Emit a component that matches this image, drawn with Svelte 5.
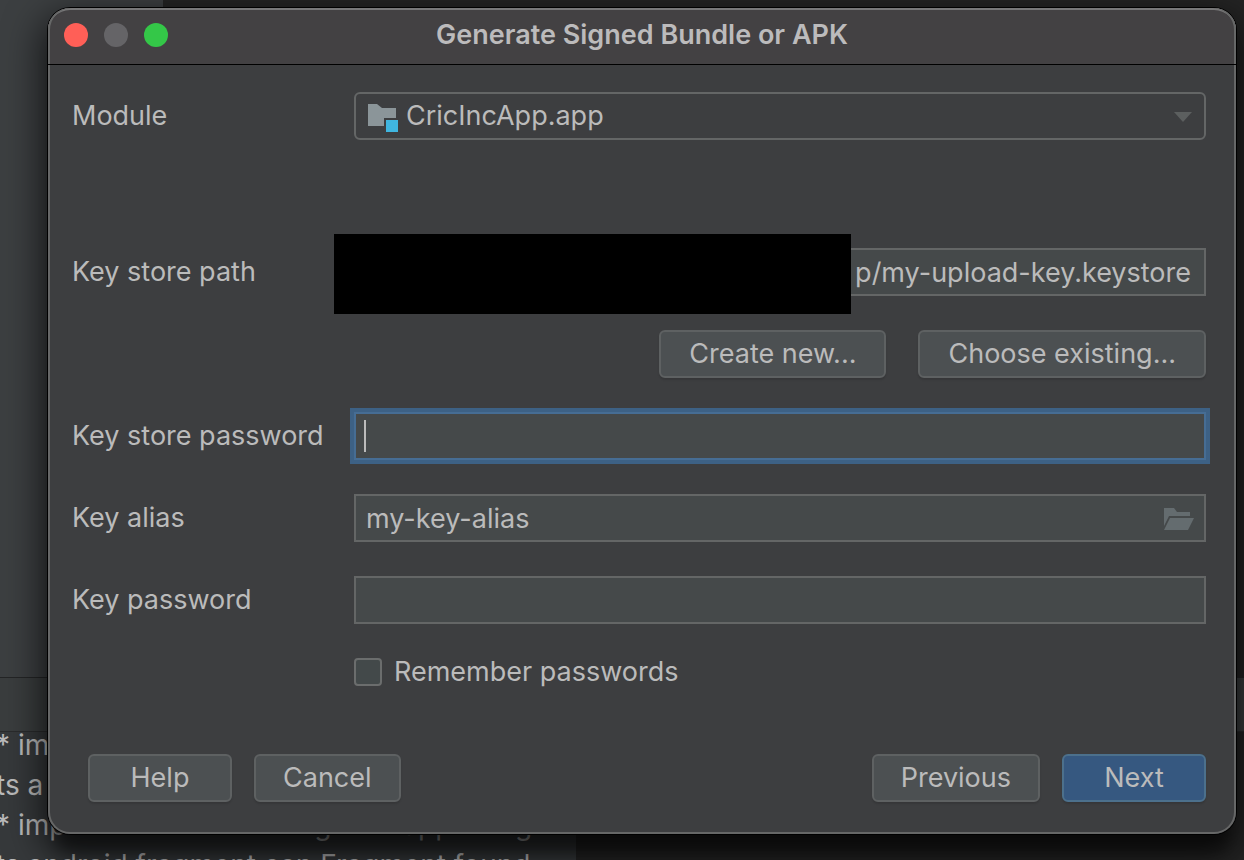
<script lang="ts">
    import { onMount } from 'svelte';

    let keyAlias = $state("my-key-alias");
    let storePassword = $state("");
    let keyPassword = $state("");
    let remember = $state(false);
    let passwordInput: HTMLInputElement;

    const editorLines = [
        "* im",
        "ts a",
        "* implements its resulting new app using",
        "ts android fragment can Fragment found",
    ];

    onMount(() => passwordInput.focus());
</script>

<main class="desktop">
    <div class="ide" aria-hidden="true">
        <div class="ide-top"></div>
        <div class="ide-bar"></div>
        <div class="ide-editor">
            <div class="code">
                {#each editorLines as line}
                    <div>{line}</div>
                {/each}
            </div>
        </div>
    </div>

    <section class="dialog" aria-labelledby="dialog-title">
        <header class="titlebar">
            <div class="lights">
                <button class="light close" aria-label="Close"></button>
                <button class="light minimize" aria-label="Minimize" disabled></button>
                <button class="light maximize" aria-label="Maximize"></button>
            </div>
            <h1 id="dialog-title">Generate Signed Bundle or APK</h1>
        </header>

        <form class="form" onsubmit={(e) => e.preventDefault()}>
            <div class="row module-row">
                <label for="module">Module</label>
                <div class="control">
                    <select id="module" class="field module">
                        <option>CricIncApp.app</option>
                    </select>
                    <svg class="folder-icon" width="32" height="28" viewBox="0 0 32 28">
                        <path d="M0 0h9l5 4h14v10H16v8H0z" fill="#8b9599" />
                        <path d="M18 16h12v12H18z" fill="#40b6e0" />
                    </svg>
                    <svg class="arrow-icon" width="18" height="10" viewBox="0 0 18 10">
                        <path d="M0 0h18l-9 10z" fill="#5c5f5f" />
                    </svg>
                </div>
            </div>

            <div class="row">
                <label for="store-path">Key store path</label>
                <div class="control">
                    <input id="store-path" class="field path" type="text" value="p/my-upload-key.keystore" />
                    <div class="redacted"></div>
                </div>
            </div>

            <div class="path-actions">
                <button type="button" class="btn">Create new...</button>
                <button type="button" class="btn">Choose existing...</button>
            </div>

            <div class="row">
                <label for="store-password">Key store password</label>
                <div class="control">
                    <input id="store-password" class="field focused" type="password" bind:this={passwordInput} bind:value={storePassword} />
                    <span class="caret"></span>
                </div>
            </div>

            <div class="row">
                <label for="key-alias">Key alias</label>
                <div class="control">
                    <input id="key-alias" class="field" type="text" bind:value={keyAlias} />
                    <button type="button" class="browse" aria-label="Browse key aliases">
                        <svg width="30" height="22" viewBox="0 0 30 22">
                            <path d="M0 0h10l3 4h13v4H5L0 18z" fill="#646c6f" />
                            <path d="M6 10h24l-6 12H0z" fill="#646c6f" />
                        </svg>
                    </button>
                </div>
            </div>

            <div class="row">
                <label for="key-password">Key password</label>
                <div class="control">
                    <input id="key-password" class="field" type="password" bind:value={keyPassword} />
                </div>
            </div>

            <label class="remember">
                <input type="checkbox" bind:checked={remember} />
                Remember passwords
            </label>

            <footer class="actions">
                <button type="button" class="btn help">Help</button>
                <button type="button" class="btn cancel">Cancel</button>
                <button type="button" class="btn previous">Previous</button>
                <button type="submit" class="btn next">Next</button>
            </footer>
        </form>
    </section>
</main>

<style>
    :global(body) {
        margin: 0;
        background: #242424;
    }

    .desktop {
        position: relative;
        box-sizing: border-box;
        min-height: 100vh;
        padding: 8px 8px 26px 48px;
        overflow: hidden;
        font-family: Inter, "Liberation Sans", sans-serif;
        font-size: 27px;
        line-height: 32px;
        color: #bbbbbb;
    }

    .ide {
        position: absolute;
        inset: 0;
        display: flex;
        flex-direction: column;
    }

    .ide-top {
        flex: 1;
        background: linear-gradient(90deg, #3c3f41 163px, #242424 163px);
    }

    .ide-bar {
        height: 53px;
        background: #3a3d3e;
        border-top: 1px solid #242526;
        border-bottom: 1px solid #2a2b2c;
    }

    .ide-editor {
        height: 128px;
        background: linear-gradient(90deg, #36393b 576px, #242424 576px);
    }

    .code {
        margin: -7px 0 0 -4px;
        font-size: 28px;
        line-height: 40px;
        white-space: pre;
    }

    .dialog {
        position: relative;
        border-radius: 22px;
        background: #3d3e40;
        box-shadow:
            inset 0 0 0 2px #666767,
            0 0 0 1px #000000,
            0 14px 36px 8px rgba(0, 0, 0, 0.6),
            0 26px 16px -8px rgba(0, 0, 0, 0.4);
    }

    .titlebar {
        display: grid;
        grid-template-columns: 1fr auto 1fr;
        align-items: center;
        height: 54px;
        padding: 0 16px 2px;
        border-bottom: 1px solid #000000;
        border-radius: 22px 22px 0 0;
        background: #434143;
        box-shadow: inset 2px 0 #666767, inset -2px 0 #666767, inset 0 2px #777778;
    }

    .lights {
        display: flex;
        gap: 16px;
    }

    .light {
        width: 24px;
        height: 24px;
        padding: 0;
        border: none;
        border-radius: 50%;
    }

    .close {
        background: #ff5f57;
    }

    .minimize {
        background: #656467;
    }

    .maximize {
        background: #34c748;
    }

    h1 {
        margin: 0;
        font-size: 27px;
        font-weight: 600;
        color: #bcbbbc;
    }

    .form {
        display: flex;
        flex-direction: column;
        gap: 34px;
        padding: 27px 30px 32px 24px;
    }

    .row {
        display: grid;
        grid-template-columns: 282px 1fr;
        align-items: center;
    }

    .module-row {
        margin-bottom: 74px;
    }

    .control {
        position: relative;
        display: flex;
    }

    .field {
        box-sizing: border-box;
        width: 100%;
        height: 48px;
        margin: 0;
        padding: 0 10px;
        border: 2px solid #646666;
        border-radius: 0;
        background: #45494a;
        color: #bbbbbb;
        font: inherit;
        outline: none;
    }

    .module {
        appearance: none;
        padding-left: 50px;
        border-radius: 6px;
        background: #3d3e40;
    }

    .folder-icon {
        position: absolute;
        left: 14px;
        top: 12px;
    }

    .arrow-icon {
        position: absolute;
        right: 14px;
        top: 20px;
    }

    .path {
        padding-right: 13px;
        text-align: right;
    }

    .redacted {
        position: absolute;
        left: -20px;
        right: 355px;
        top: -14px;
        height: 80px;
        background: #000000;
    }

    .path-actions {
        display: flex;
        justify-content: flex-end;
        gap: 32px;
    }

    .btn {
        box-sizing: border-box;
        height: 48px;
        padding: 0 27px;
        border: 2px solid #5e6162;
        border-radius: 6px;
        background: #4c5052;
        box-shadow: 0 2px 2px rgba(0, 0, 0, 0.12);
        color: #bbbbbb;
        font: inherit;
    }

    .path-actions .btn {
        padding: 0 28px;
    }

    .focused {
        border-color: #466d94;
        box-shadow: 0 0 0 4px #3d6185;
        caret-color: transparent;
    }

    .caret {
        position: absolute;
        left: 10px;
        top: 8px;
        width: 2px;
        height: 32px;
        background: #bbbbbb;
    }

    .browse {
        position: absolute;
        right: 12px;
        top: 14px;
        display: flex;
        padding: 0;
        border: none;
        background: none;
    }

    .remember {
        display: flex;
        align-items: center;
        gap: 12px;
        margin-left: 282px;
        line-height: 28px;
    }

    .remember input {
        appearance: none;
        box-sizing: border-box;
        width: 28px;
        height: 28px;
        margin: 0;
        border: 2px solid #6b6d6d;
        border-radius: 4px;
        background: #43494a;
    }

    .remember input:checked {
        background: #365880;
    }

    .actions {
        display: flex;
        gap: 22px;
        margin-top: 34px;
        padding-left: 16px;
    }

    .actions .btn {
        min-width: 144px;
    }

    .previous {
        margin-left: auto;
    }

    .next {
        border-color: #4c708c;
        background: #365880;
    }
</style>
